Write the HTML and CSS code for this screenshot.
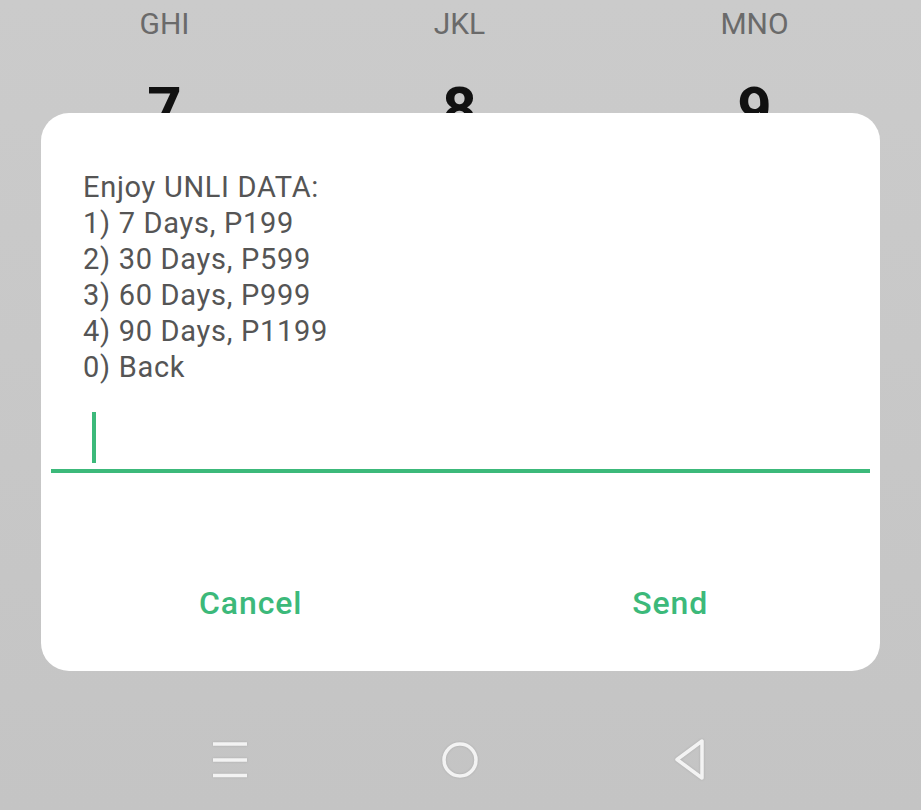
FILE: index.html
```html
<!DOCTYPE html>
<html lang="en">

<head>
  <meta charset="UTF-8">
  <meta name="viewport" content="width=device-width, initial-scale=1.0">
  <title>USSD</title>

  <link rel="stylesheet" href="styles.css">
</head>

<body>
  <div class="screen">
    <div class="keypad">
      <div class="keyRow letters">
        <span>GHI</span>
        <span>JKL</span>
        <span>MNO</span>
      </div>
      <div class="keyRow digits">
        <span>7</span>
        <span>8</span>
        <span>9</span>
      </div>
    </div>

    <div class="dialog">
      <p class="message">Enjoy UNLI DATA:<br>1) 7 Days, P199<br>2) 30 Days, P599<br>3) 60 Days, P999<br>4) 90 Days, P1199<br>0) Back</p>

      <div class="field">
        <span class="cursor"></span>
      </div>

      <div class="actions">
        <button class="action">Cancel</button>
        <button class="action">Send</button>
      </div>
    </div>

    <div class="navbar">
      <div class="navItem">
        <svg width="40" height="40" viewBox="0 0 40 40">
          <path d="M3 4H37M3 20H37M3 35.5H37" stroke="#f3f3f3" stroke-width="3.5" fill="none" />
        </svg>
      </div>
      <div class="navItem">
        <svg width="40" height="40" viewBox="0 0 40 40">
          <circle cx="20" cy="20" r="16" stroke="#f3f3f3" stroke-width="3.5" fill="none" />
        </svg>
      </div>
      <div class="navItem">
        <svg width="40" height="44" viewBox="0 0 40 44">
          <path d="M31 3V40L6 21.5Z" stroke="#f3f3f3" stroke-width="3.5" stroke-linejoin="round" fill="none" />
        </svg>
      </div>
    </div>
  </div>
</body>

</html>
```

FILE: styles.css
```css
body,
html {
  margin: 0;
  padding: 0;
  background-color: #c8c8c8;
  font-family: Roboto, 'Liberation Sans', sans-serif;
}

.screen {
  display: flex;
  flex-direction: column;

  width: 921px;
  height: 810px;
  overflow: hidden;

  background: linear-gradient(#cbcbcb, #c4c4c4);
}

.keypad {
  height: 113px;
  overflow: hidden;
}

.keyRow {
  display: grid;
  grid-template-columns: repeat(3, 295px);
  padding-left: 17px;
  text-align: center;
}

.letters {
  height: 48px;
  padding-top: 4px;

  font-size: 30px;
  line-height: 40px;
  color: #6a6a6a;
}

.digits {
  padding-top: 28px;

  font-size: 60px;
  font-weight: bold;
  line-height: 58px;
  color: #111;
}

.dialog {
  display: flex;
  flex-direction: column;

  height: 558px;
  margin: 0 41px;

  background-color: #fff;
  border-radius: 28px;
}

.message {
  margin: 0;
  padding: 56px 0 0 42px;

  font-size: 29px;
  letter-spacing: 0.7px;
  line-height: 36px;
  color: #555;
}

.field {
  display: flex;
  align-items: flex-end;

  height: 62px;
  margin: 22px 10px 0;
  padding-left: 41px;

  border-bottom: 4px solid #3cb97a;
}

.cursor {
  display: block;
  width: 4px;
  height: 51px;
  margin-bottom: 6px;

  background-color: #3cb97a;
}

.actions {
  display: grid;
  grid-template-columns: 1fr 1fr;
  margin-top: 110px;
}

.action {
  padding: 0;
  background: none;
  border: none;

  font-family: Roboto, 'Liberation Sans', sans-serif;
  font-size: 32px;
  font-weight: 500;
  letter-spacing: 0.9px;
  line-height: 40px;
  color: #3cb97a;
}

.navbar {
  display: grid;
  grid-template-columns: repeat(3, 1fr);
  align-items: center;

  flex: 1;
  padding: 38px 115px 0;
}

.navItem {
  display: flex;
  justify-content: center;
}

.navItem svg {
  filter: drop-shadow(0 0 1px rgba(0, 0, 0, 0.12));
}
```
